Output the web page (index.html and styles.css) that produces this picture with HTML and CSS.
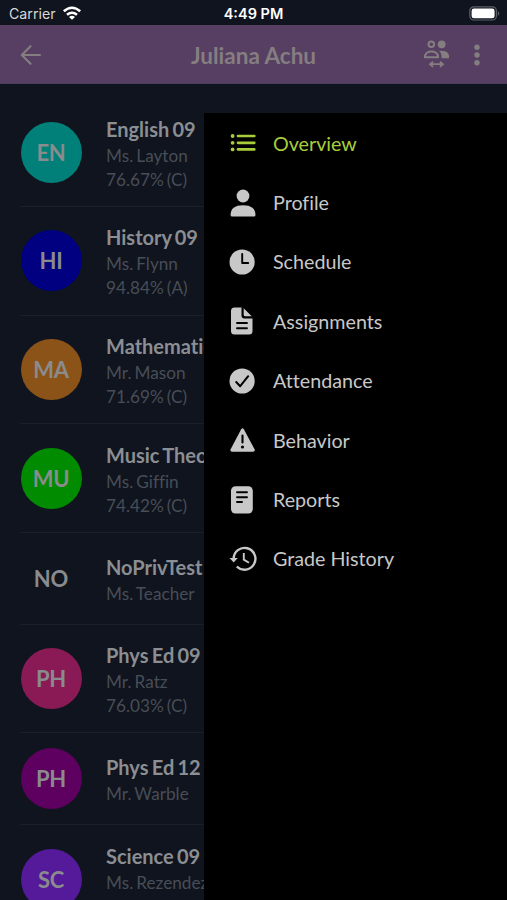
FILE: index.html
```html
<!DOCTYPE html>
<html lang="en">
<head>
<meta charset="utf-8">
<title>Juliana Achu</title>
<link rel="stylesheet" href="styles.css">
</head>
<body>
<div class="screen">
  <div class="status">
    <div class="carrier"><span>Carrier</span>
      <svg width="20" height="15" viewBox="0 0 20 15" fill="none" stroke="#fff" stroke-width="2.5"><path d="M1.8 5.3Q10-1.8 18.2 5.3M5 8.8Q10 4.6 15 8.8"/><path d="M10 13.8L7 10.9Q10 8.7 13 10.9Z" fill="#fff" stroke="none"/></svg>
    </div>
    <span class="time">4:49 PM</span>
    <svg class="battery" width="31" height="15" viewBox="0 0 31 15"><rect x=".8" y=".8" width="26.6" height="13.2" rx="4" fill="none" stroke="#5c6067" stroke-width="1.2"/><rect x="2.6" y="2.6" width="23" height="9.6" rx="2.3" fill="#fff"/><path d="M28.8 5v5q3-2.5 0-5" fill="#5c6067"/></svg>
  </div>
  <header class="bar">
    <svg class="back" width="22" height="20" viewBox="0 0 22 20" fill="none" stroke="#857e80" stroke-width="2.1" stroke-linecap="round" stroke-linejoin="round"><path d="M20 10H2M10.500 1.200L1.800 10l8.700 8.800"/></svg>
    <h1>Juliana Achu</h1>
    <svg class="people" width="27" height="28" viewBox="0 0 27 28" fill="#857e80"><circle cx="8.300" cy="4.300" r="2.800" fill="none" stroke="#857e80" stroke-width="2"/><circle cx="18.700" cy="4.300" r="3.900"/><path d="M2 17.200v-1.500Q3.500 11.600 8.500 11.600T15 15.700v1.500Z" fill="none" stroke="#857e80" stroke-width="2"/><path d="M16 10.700Q26 10.300 26 16v2.200h-7.500V15.800Q18.400 12.700 16 10.700Z"/><path d="M7.500 24.200h12M10 21.700l-3 2.500 3 2.500M17 21.700l3 2.500-3 2.500" fill="none" stroke="#857e80" stroke-width="1.800"/></svg>
    <svg class="more" width="6" height="22" viewBox="0 0 6 22" fill="#857e80"><circle cx="3" cy="3.200" r="2.700"/><circle cx="3" cy="11" r="2.700"/><circle cx="3" cy="18.800" r="2.700"/></svg>
  </header>
  <main class="classes">
    <article class="row"><div class="avatar teal">EN</div><div class="info"><h2>English 09</h2><p>Ms. Layton</p><p>76.67% (C)</p></div></article>
    <article class="row"><div class="avatar blue">HI</div><div class="info"><h2>History 09</h2><p>Ms. Flynn</p><p>94.84% (A)</p></div></article>
    <article class="row"><div class="avatar orange">MA</div><div class="info"><h2>Mathematics</h2><p>Mr. Mason</p><p>71.69% (C)</p></div></article>
    <article class="row"><div class="avatar green">MU</div><div class="info"><h2>Music Theory</h2><p>Ms. Giffin</p><p>74.42% (C)</p></div></article>
    <article class="row short"><div class="avatar">NO</div><div class="info"><h2>NoPrivTest</h2><p>Ms. Teacher</p></div></article>
    <article class="row"><div class="avatar pink">PH</div><div class="info"><h2>Phys Ed 09</h2><p>Mr. Ratz</p><p>76.03% (C)</p></div></article>
    <article class="row short"><div class="avatar plum">PH</div><div class="info"><h2>Phys Ed 12</h2><p>Mr. Warble</p></div></article>
    <article class="row last"><div class="avatar violet">SC</div><div class="info"><h2>Science 09</h2><p>Ms. Rezendez</p></div></article>
  </main>
  <nav class="drawer">
    <a class="item active"><svg viewBox="0 0 28 28"><g fill="currentColor"><circle cx="3.600" cy="7" r="1.900"/><circle cx="3.600" cy="13.800" r="1.900"/><circle cx="3.600" cy="20.400" r="1.900"/></g><path d="M9 7h16.300M9 13.800h16.300M9 20.400h16.300" stroke="currentColor" stroke-width="2.700" stroke-linecap="round"/></svg><span>Overview</span></a>
    <a class="item"><svg viewBox="0 0 28 28" fill="currentColor"><circle cx="14" cy="7" r="6.400"/><path d="M1.600 26Q1.600 16.200 14 16.200T26.500 26q0 1.500-1.500 1.500H3.100Q1.600 27.500 1.600 26Z"/></svg><span>Profile</span></a>
    <a class="item"><svg viewBox="0 0 28 28"><circle cx="13.100" cy="14" r="12.600" fill="currentColor"/><path d="M13.200 6v9h6" fill="none" stroke="#000" stroke-width="1.900" stroke-linecap="round" stroke-linejoin="round"/></svg><span>Schedule</span></a>
    <a class="item"><svg viewBox="0 0 28 28"><path d="M5.500.5h7v8q0 3 3 3h8v12.500q0 3.500-3.500 3.500H5.500Q2 27.500 2 24V4Q2 .5 5.500.5Z" fill="currentColor"/><path d="M14.700 1.200v6.600q0 1.500 1.500 1.500h6.500Z" fill="currentColor"/><path d="M8 16h10M8 21.200h10" stroke="#000" stroke-width="1.900" stroke-linecap="round"/></svg><span>Assignments</span></a>
    <a class="item"><svg viewBox="0 0 28 28"><circle cx="13.100" cy="14" r="12.600" fill="currentColor"/><path d="M7.200 15l4 4.200 8-10" fill="none" stroke="#000" stroke-width="2" stroke-linecap="round" stroke-linejoin="round"/></svg><span>Attendance</span></a>
    <a class="item"><svg viewBox="0 0 28 28"><path d="M12.200 3.200q1.300-2 2.600 0L25.700 23.500q.6 2-1.500 2.300H2.900Q.8 25.500 1.500 23.500Z" fill="currentColor"/><path d="M13.500 9.500v7" stroke="#000" stroke-width="2.100" stroke-linecap="round"/><circle cx="13.500" cy="21" r="1.600" fill="#000"/></svg><span>Behavior</span></a>
    <a class="item"><svg viewBox="0 0 28 28"><rect x="2" y=".2" width="21.800" height="27.400" rx="4.500" fill="currentColor"/><path d="M8 6.300h10M8 11.200h10M8 16h5" stroke="#000" stroke-width="1.900" stroke-linecap="round"/></svg><span>Reports</span></a>
    <a class="item"><svg viewBox="0 0 28 28" fill="none" stroke="currentColor"><path d="M4.600 13.800a10.900 10.900 0 1 1 3.200 7.700" stroke-width="2.400"/><path d="M.5 13h8.200l-4 4.500Z" fill="currentColor" stroke="none"/><path d="M14.800 8v6.600l5.200 3.200" stroke-width="1.900"/></svg><span>Grade History</span></a>
  </nav>
</div>
</body>
</html>
```
FILE: styles.css
```css
* { box-sizing: border-box; }
body {
  margin: 0;
  background: #0f141e;
  font-family: Lato, sans-serif;
  font-variant-ligatures: none;
}
h1, h2, p { margin: 0; }
.screen {
  position: relative;
  width: 507px;
  height: 900px;
  overflow: hidden;
}
.status {
  display: grid;
  grid-template-columns: 1fr auto 1fr;
  align-items: center;
  height: 25px;
  padding: 2px 7px 0 9px;
  color: #fff;
  font: 14.5px/24px Inter, sans-serif;
}
.carrier {
  display: flex;
  align-items: center;
  gap: 6px;
  color: #d6d8da;
  font-size: 14.2px;
}
.carrier svg { margin-top: -2px; }
.time {
  margin-left: -2px;
  font-weight: 600;
  font-size: 14.5px;
}
.battery {
  justify-self: end;
  margin-top: -2px;
}
.bar {
  display: grid;
  grid-template-columns: 22px 1fr 27px 6px;
  align-items: center;
  height: 59px;
  padding: 2px 27px 0 20px;
  background: #563f63;
  border-bottom: 1px solid #49405a;
}
.bar h1 {
  padding: 1px 0 0 18px;
  text-align: center;
  color: #857e80;
  font-size: 22.5px;
  line-height: 30px;
}
.people { position: relative; left: -24px; top: -1px; }
.classes { padding: 14.500px 20px 0; }
.row {
  display: flex;
  align-items: center;
  height: 108.600px;
  border-bottom: 1px solid #1a202a;
}
.row.short { height: 92px; }
.avatar {
  flex: none;
  width: 61px;
  height: 61px;
  margin: 0 24.500px 0 .5px;
  border-radius: 50%;
  color: #8a8b8d;
  font-size: 22px;
  font-weight: 700;
  letter-spacing: -.2px;
  line-height: 61px;
  text-align: center;
}
.teal { background: #008078; }
.blue { background: #000080; }
.orange { background: #8b5318; }
.green { background: #008b00; }
.pink { background: #8a1a55; }
.plum { background: #5d005f; }
.violet { background: #551a99; }
.info {
  padding-top: 1px;
  white-space: nowrap;
}
.last .info { padding-bottom: 24px; }
.info h2 {
  color: #8b8e92;
  font-size: 20px;
  line-height: 30px;
  word-spacing: -1.6px;
}
.info p {
  color: #484d56;
  font-size: 17.200px;
  line-height: 24px;
  word-spacing: -1.3px;
}
.drawer {
  position: absolute;
  top: 113px;
  right: 0;
  bottom: 0;
  width: 303.500px;
  padding-top: .5px;
  background: #000;
}
.item {
  display: flex;
  align-items: center;
  gap: 16px;
  height: 59.400px;
  padding-left: 25.500px;
  color: #c8c8c8;
  font-size: 19.700px;
}
.item svg {
  width: 28px;
  height: 28px;
}
.item.active { color: #a9cd3a; }
```
